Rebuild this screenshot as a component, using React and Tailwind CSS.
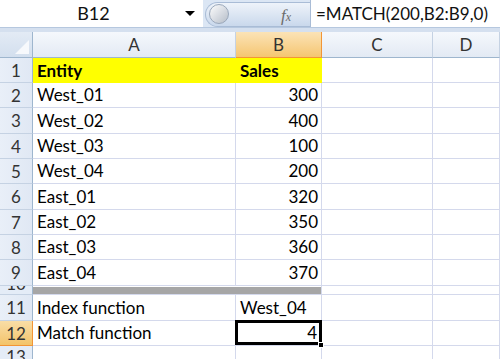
import React from "react";

const rows = [
  { n: "1", h: "h-[25px]", a: "Entity", b: "Sales", yellow: true },
  { n: "2", h: "h-[25px]", a: "West_01", b: "300" },
  { n: "3", h: "h-[26px]", a: "West_02", b: "400" },
  { n: "4", h: "h-[25px]", a: "West_03", b: "100" },
  { n: "5", h: "h-[25px]", a: "West_04", b: "200" },
  { n: "6", h: "h-[26px]", a: "East_01", b: "320" },
  { n: "7", h: "h-[25px]", a: "East_02", b: "350" },
  { n: "8", h: "h-[25px]", a: "East_03", b: "360" },
  { n: "9", h: "h-[26px]", a: "East_04", b: "370" },
];

function RowHeader({ children, h, selected }) {
  return (
    <div
      className={
        "flex items-center justify-center overflow-hidden border-b border-r text-[17px] leading-none " +
        h +
        (selected
          ? " bg-gradient-to-b from-[#f9dda6] to-[#f3c46a] border-r-[#f29536] border-b-[#f29536] text-[#333]"
          : " bg-gradient-to-r from-[#e9eff8] to-[#e0e8f4] border-b-[#c5d2e3] border-r-[#9eb6ce] text-[#333]")
      }
    >
      {children}
    </div>
  );
}

export default function App() {
  return (
    <div
      className="w-[500px] h-[359px] overflow-hidden bg-white"
      style={{ fontFamily: 'Lato, "Liberation Sans", Arial, sans-serif' }}
    >
      {/* Formula bar */}
      <div className="flex h-[27px] bg-[#dbe6f4]">
        <div className="w-[203px] h-full bg-white flex items-center">
          <div className="flex-1 text-center text-[18px] text-[#111] pl-[2px]">B12</div>
          <div className="w-0 h-0 border-l-[5px] border-r-[5px] border-t-[5px] border-l-transparent border-r-transparent border-t-black mr-[8px]" />
        </div>
        <div className="relative w-[107px] h-full">
          <div className="absolute left-[2px] top-[2px] right-0 bottom-[0px] rounded-l-full bg-gradient-to-b from-[#eef3fa] via-[#dce6f3] to-[#c9d8ec] border border-r-0 border-[#a9bcd6]" />
          <div className="absolute left-[6px] top-[4px] w-[20px] h-[20px] rounded-full bg-gradient-to-br from-[#fdfdfd] via-[#d9dde3] to-[#b6bec9] border border-[#9aa8bb]" />
          <div
            className="absolute left-[78px] top-[3px] text-[#6b6b6b] italic text-[17px]"
            style={{ fontFamily: '"Liberation Serif", "Times New Roman", serif' }}
          >
            f<span className="text-[12px]">x</span>
          </div>
        </div>
        <div className="flex-1 h-full bg-white border-l border-[#a9bcd6] flex items-center pl-[5px] text-[17px] text-[#111]">
          =MATCH(200,B2:B9,0)
        </div>
      </div>
      <div className="h-[5px] bg-[#d5e0ef] border-t border-[#b6c8df]" />

      {/* Grid */}
      <div className="grid grid-cols-[33px_203px_86px_111px_67px]">
        {/* header */}
        <div className="h-[26px] bg-gradient-to-b from-[#e3ebf5] to-[#d3dfee] border-b border-r border-[#9eb6ce] relative overflow-hidden">
          <div
            className="absolute right-[3px] bottom-[3px] w-[14px] h-[14px] bg-[#f7f9fc]"
            style={{ clipPath: "polygon(100% 0, 100% 100%, 0 100%)" }}
          />
        </div>
        {["A", "B", "C", "D"].map((c) => (
          <div
            key={c}
            className={
              "h-[26px] flex items-center justify-center text-[17px] border-b border-r " +
              (c === "B"
                ? "bg-gradient-to-b from-[#fbe3b6] to-[#f5c670] border-[#f29536] text-[#333]"
                : "bg-gradient-to-b from-[#f5f8fc] to-[#e3eaf4] border-b-[#9eb6ce] border-r-[#c5d2e3] text-[#333]")
            }
          >
            {c}
          </div>
        ))}

        {rows.map((r) => (
          <React.Fragment key={r.n}>
            <RowHeader h={r.h}>{r.n}</RowHeader>
            <div
              className={
                "flex items-center pl-[4px] text-[17px] text-black " +
                r.h +
                (r.yellow ? " bg-[#ffff00] font-bold" : " border-b border-r border-[#d4d9ec]")
              }
            >
              {r.a}
            </div>
            <div
              className={
                "flex items-center text-[17px] text-black " +
                r.h +
                (r.yellow
                  ? " bg-[#ffff00] font-bold pl-[4px]"
                  : " justify-end pr-[3px] border-b border-r border-[#d4d9ec]")
              }
            >
              {r.b}
            </div>
            <div className={"border-b border-r border-[#d4d9ec] " + r.h} />
            <div className={"border-b border-r border-[#d4d9ec] " + r.h} />
          </React.Fragment>
        ))}

        {/* row 10 */}
        <div className="h-[9px] overflow-hidden border-b border-r border-b-[#c5d2e3] border-r-[#9eb6ce] bg-[#e4ecf7] flex justify-center">
          <span className="text-[17px] leading-none text-[#333] -mt-[11px]">10</span>
        </div>
        <div className="h-[9px] border-b border-[#d4d9ec] pt-[1px]">
          <div className="h-full bg-[#a6a6a6]" />
        </div>
        <div className="h-[9px] border-b border-r border-[#d4d9ec] pt-[1px]">
          <div className="h-full bg-[#a6a6a6]" />
        </div>
        <div className="h-[9px] border-b border-r border-[#d4d9ec]" />
        <div className="h-[9px] border-b border-r border-[#d4d9ec]" />

        {/* row 11 */}
        <RowHeader h="h-[26px]">11</RowHeader>
        <div className="h-[26px] flex items-center pl-[4px] text-[17px] text-black border-b border-r border-[#d4d9ec]">
          Index function
        </div>
        <div className="h-[26px] flex items-center pl-[4px] text-[17px] text-black border-b border-r border-[#d4d9ec]">
          West_04
        </div>
        <div className="h-[26px] border-b border-r border-[#d4d9ec]" />
        <div className="h-[26px] border-b border-r border-[#d4d9ec]" />

        {/* row 12 */}
        <RowHeader h="h-[25px]" selected>
          12
        </RowHeader>
        <div className="h-[25px] flex items-center pl-[4px] text-[17px] text-black border-b border-r border-[#d4d9ec]">
          Match function
        </div>
        <div className="relative h-[25px] flex items-center justify-end pr-[4px] text-[17px] text-black border-b border-r border-[#d4d9ec]">
          4
          <div className="absolute -left-[1px] -top-[1px] -right-[1px] -bottom-[0px] border-[3px] border-black" />
          <div className="absolute -right-[3px] -bottom-[3px] w-[6px] h-[6px] bg-black border border-white" />
        </div>
        <div className="h-[25px] border-b border-r border-[#d4d9ec]" />
        <div className="h-[25px] border-b border-r border-[#d4d9ec]" />

        {/* row 13 */}
        <div className="h-[25px] overflow-hidden border-r border-r-[#9eb6ce] bg-[#e4ecf7] flex justify-center">
          <span className="text-[17px] leading-none text-[#333] mt-[2px]">13</span>
        </div>
        <div className="h-[25px] border-r border-[#d4d9ec]" />
        <div className="h-[25px] border-r border-[#d4d9ec]" />
        <div className="h-[25px] border-r border-[#d4d9ec]" />
        <div className="h-[25px] border-r border-[#d4d9ec]" />
      </div>
    </div>
  );
}
